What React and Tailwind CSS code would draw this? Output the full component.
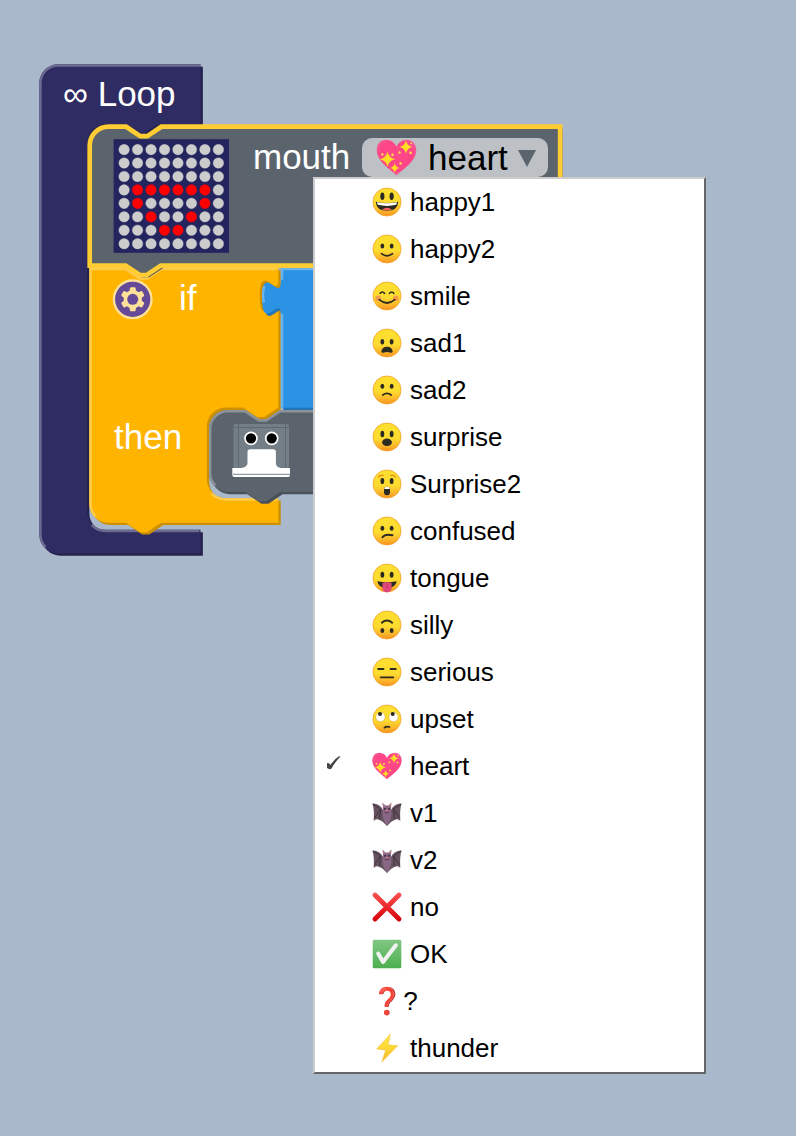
const LIT = new Set(['3-1', '3-2', '3-3', '3-4', '3-5', '3-6', '4-1', '4-6', '5-2', '5-5', '6-3', '6-4']);

const OPTIONS = [
  'happy1', 'happy2', 'smile', 'sad1', 'sad2', 'surprise', 'Surprise2', 'confused', 'tongue', 'silly',
  'serious', 'upset', 'heart', 'v1', 'v2', 'no', 'OK', '?', 'thunder',
];

// One block outline: shadow copy offset by one unit, body, then the highlighted edges.
function Shape({ x, y, d, light, fill, dark, hi, selected }) {
  return (
    <g transform={`translate(${x} ${y}) scale(2.35)`}>
      <path d={d} transform="translate(1 1)" fill={dark} />
      <path d={d} fill={fill} stroke={selected ? '#ffcc33' : 'none'} strokeWidth="2" />
      {light && <path d={light} fill="none" stroke={hi} strokeWidth="1" />}
    </g>
  );
}

const NOTCH = 'l 6,4 3,0 6,-4';
const NOTCH_BACK = 'l -6,4 -3,0 -6,-4';
const TAB = 'V 20.3 c 0,-10 -8,8 -8,-7.5 s 8,2.5 8,-7.5';

function Blocks() {
  return (
    <svg className="absolute inset-0" width="796" height="1136" viewBox="0 0 796 1136">
      <Shape x={39.3} y={64.3} fill="#2e2c62" dark="#25234e" hi="#6d6b91"
        d={`m 0,8 A 8,8 0 0,1 8,0 H 68.6 V 25.5 H 50.3 ${NOTCH_BACK} h -7 a 8,8 0 0,0 -8,8 V 190.100 a 8,8 0 0,0 8,8 H 68.6 V 208.1 H 8 a 8,8 0 0,1 -8,-8 z`}
        light="M 2.7,205.4 A 7.5,7.5 0 0,1 0.5,200.1 V 8 A 7.5,7.5 0 0,1 8,0.5 H 68.6 M 22.3,196.1 A 8.5,8.5 0 0,0 28.3,198.6 H 68.1" />
      <Shape x={89.4} y={268} fill="#ffb400" dark="#cc9000" hi="#ffcb4d"
        d={`m 0,0 H 15.500 ${NOTCH} H 80.4 V 59.4 ${NOTCH_BACK} h -7.4 a 8,8 0 0,0 -8,8 V 90 a 8,8 0 0,0 8,8 H 80.4 V 108.4 H 30.500 ${NOTCH_BACK} H 8 a 8,8 0 0,1 -8,-8 z`}
        light="M 2.7,105.7 A 7.5,7.5 0 0,1 0.5,100.4 V 0.5 H 15.5 l 6,4 3,0 6,-4 H 80 M 52,96 A 8.5,8.5 0 0,0 58,98.5 H 80" />
      <g transform="translate(278.6 266) scale(2.35)">
        <path d={`M 0,5 ${TAB} z`} fill="#cc9000" />
      </g>
      <Shape x={280.9} y={268} fill="#2b92e4" dark="#2275b6" hi="#6bb3ec"
        d={`M 0,0 H 60 V 59.5 H 0 ${TAB} z`}
        light="M 0.5,59.5 V 19.5 M -7.2,14.8 C -7.7,12.9 -7.7,9.8 -7,7.7 M 0.5,5 V 0.5 H 60" />
      <Shape x={209} y={410.1} fill="#5b646d" dark="#495057" hi="#8c9399"
        d={`m 0,8 A 8,8 0 0,1 8,0 H 15.300 ${NOTCH} H 80 V 34.8 H 30.300 ${NOTCH_BACK} H 8 a 8,8 0 0,1 -8,-8 z`}
        light="M 2.7,32.1 A 7.5,7.5 0 0,1 0.5,26.8 V 8 A 7.5,7.5 0 0,1 8,0.5 H 15.3 l 6,4 3,0 6,-4 H 80" />
      <Shape x={89.7} y={126.7} selected fill="#5b646d" dark="#495057"
        d={`m 0,8 A 8,8 0 0,1 8,0 H 15.500 ${NOTCH} H 200.2 V 59.1 H 30.300 ${NOTCH_BACK} H 0 z`} />
    </svg>
  );
}

function LedMatrix() {
  return (
    <svg className="mt-px shrink-0" width="116" height="114" viewBox="113 139 116 114">
      <rect x="113.6" y="139.200" width="115.4" height="113.600" fill="#24255f" />
      {Array.from({ length: 64 }, (_, i) => {
        const key = `${Math.floor(i / 8)}-${i % 8}`;
        const color = LIT.has(key) ? '#ff0000' : '#cccccc';
        return (
          <circle key={key} cx={124.1 + (i % 8) * 13.47} cy={149.6 + Math.floor(i / 8) * 13.44} r="5.3"
            fill={color} stroke={color} strokeOpacity="0.35" strokeWidth="0.9" />
        );
      })}
    </svg>
  );
}

function Gear() {
  return (
    <svg className="mt-px shrink-0" width="42" height="42" viewBox="112 279 42 42">
      <g transform="translate(113.9 280.5) scale(2.35)">
        <circle cx="8" cy="8" r="8" fill="#644a97" stroke="#ffe199" strokeWidth="1" />
        <path fill="#ffe199" d="m4.203,7.296 0,1.368 -0.92,0.677 -0.11,0.41 0.9,1.592 0.41,0.11 1.043,-0.457 1.187,0.683 0.127,1.134 0.3,0.3 1.8,0 0.3,-0.299 0.127,-1.138 1.185,-0.682 1.046,0.458 0.409,-0.11 0.9,-1.592 -0.11,-0.41 -0.92,-0.677 0,-1.366 0.92,-0.677 0.11,-0.41 -0.9,-1.592 -0.409,-0.109 -1.046,0.458 -1.185,-0.682 -0.127,-1.138 -0.3,-0.299 -1.8,0 -0.3,0.3 -0.126,1.135 -1.187,0.682 -1.043,-0.457 -0.41,0.11 -0.899,1.592 0.108,0.409z" />
        <circle cx="8" cy="8" r="2.35" fill="#644a97" />
      </g>
    </svg>
  );
}

function Robot() {
  return (
    <svg className="mt-[5px] shrink-0" width="64" height="58" viewBox="230 422 64 58">
      <rect x="233.5" y="424" width="55.5" height="48" rx="2" fill="#747e87" />
      <path d="M233.5 427.5H289M238.5 424V470M285.5 424V470" stroke="#59636c" strokeWidth="0.8" fill="none" />
      <path d="M232.300 468h9.200q6-1 6-5v-11q0-2.700 2.700-2.700h23q2.700 0 2.700 2.700v11q0 4 4.500 5h9.600v7q0 2-2 2h-53.700q-2 0-2-2z" fill="#fff" />
      <path d="M233 474.3H290" stroke="#5b646d" strokeWidth="0.8" />
      <circle cx="251" cy="438.3" r="6" fill="#000" stroke="#fff" strokeWidth="1.7" />
      <circle cx="271.7" cy="438.3" r="6" fill="#000" stroke="#fff" strokeWidth="1.7" />
    </svg>
  );
}

const INK = '#2b2b22';

function Eyes({ y, rx = 1.9, ry = 2.5, w = 9.3 }) {
  return (
    <g fill={INK}>
      <ellipse cx={16 - w / 2} cy={y} rx={rx} ry={ry} />
      <ellipse cx={16 + w / 2} cy={y} rx={rx} ry={ry} />
    </g>
  );
}

const line = { fill: 'none', stroke: INK, strokeWidth: 1.7, strokeLinecap: 'round' };

const FACES = {
  happy1: (
    <>
      <Eyes y={10.3} rx={2.1} ry={3.8} />
      <path d="M4.7 15.700Q16 18.300 27.300 15.700Q26.500 24.800 16 24.800Q5.500 24.800 4.700 15.700z" fill={INK} />
      <path d="M6 16.300Q16 18.300 26 16.300L25.300 18.800Q16 21 6.700 18.800z" fill="#fff" />
      <path d="M11 23.600Q16 19.800 21 23.600Q16 25.300 11 23.600z" fill="#f0625d" />
    </>
  ),
  happy2: <><Eyes y={13} /><path d="M10.500 20.700Q16 25 21.500 20.700" {...line} /></>,
  smile: (
    <>
      <circle cx="7.200" cy="18.200" r="2.800" fill="#f47a5e" opacity="0.65" />
      <circle cx="24.800" cy="18.200" r="2.800" fill="#f47a5e" opacity="0.65" />
      <path d="M9.200 13.300Q11.300 10.700 13.500 13.300M18.500 13.300Q20.700 10.700 22.800 13.300" {...line} />
      <path d="M8.200 19.700Q16 26.300 23.800 19.700" {...line} />
    </>
  ),
  sad1: <><Eyes y={14.8} ry={2.8} /><path d="M10.300 24.500Q11 19.700 16 19.700T21.700 24.500Q21.200 26.300 19 25.500Q16 24.300 13 25.500Q10.800 26.300 10.300 24.500z" fill={INK} /></>,
  sad2: <><Eyes y={12.2} /><path d="M11.800 21Q16 17.800 20.200 21" {...line} /></>,
  surprise: <><Eyes y={13} ry={3.2} /><ellipse cx="16" cy="21.300" rx="4.900" ry="3.700" fill={INK} /></>,
  Surprise2: (
    <>
      <path d="M7.500 9Q10 6.500 12.500 7.500M19.500 7.500Q22 6.500 24.500 9" fill="none" stroke="#e88b18" strokeWidth="1.200" strokeLinecap="round" />
      <Eyes y={13} ry={3.1} />
      <rect x="13" y="18.700" width="6" height="8.600" rx="3" fill={INK} />
      <path d="M13.200 21Q13.500 18.700 16 18.700T18.800 21z" fill="#fff" />
    </>
  ),
  confused: <><Eyes y={13.3} /><path d="M11.500 22.300Q14.200 18.300 21.500 20.300" {...line} strokeWidth="2" /></>,
  tongue: (
    <>
      <Eyes y={12.7} ry={3} />
      <path d="M6.300 19.300Q16 21.500 25.700 19.300Q24.500 26 16 26.300Q7.500 26 6.300 19.300z" fill={INK} />
      <path d="M11.400 21Q16 19.600 20.600 21V26Q20.300 30.300 16 30.300T11.400 26z" fill="#e0487c" />
      <path d="M16 21.500V26" stroke="#b52f60" strokeWidth="0.800" />
    </>
  ),
  silly: <><Eyes y={21.6} /><path d="M10.800 13.700Q16 9.500 21.200 13.700" {...line} strokeWidth="1.900" /></>,
  serious: <path d="M7.200 13H12.500M19.500 13H24.800M9.800 21.400H22.200" {...line} strokeWidth="1.900" />,
  upset: (
    <>
      <circle cx="9.500" cy="14" r="4.700" fill="#fff" stroke="#d99a20" strokeWidth="0.500" />
      <circle cx="22.500" cy="14" r="4.700" fill="#fff" stroke="#d99a20" strokeWidth="0.500" />
      <circle cx="9" cy="11.100" r="2" fill={INK} />
      <circle cx="21.700" cy="11.100" r="2" fill={INK} />
      <path d="M13.500 24.700Q15.500 22.800 18.500 24" {...line} />
    </>
  ),
};

const star = (x, y, r) =>
  `M${x} ${y - r}Q${x + r * 0.15} ${y - r * 0.15} ${x + r} ${y}Q${x + r * 0.15} ${y + r * 0.15} ${x} ${y + r}Q${x - r * 0.15} ${y + r * 0.15} ${x - r} ${y}Q${x - r * 0.15} ${y - r * 0.15} ${x} ${y - r}z`;

const BAT = (
  <>
    <path d="M1.300 6.500Q7 6.500 10.500 10.500L12 13H20L21.500 10.500Q25 6.500 30.700 6.500Q28.500 12 29.300 24Q27 21 23.500 23Q19.500 24.500 18.500 26.500L16 29L13.500 26.500Q12.500 24.500 8.500 23Q5 21 2.700 24Q3.500 12 1.300 6.500z" fill="#65525f" />
    <path d="M2 7L9.500 12L8.500 22M9.500 12L3.500 21M30 7L22.500 12L23.500 22M22.500 12L28.500 21" fill="none" stroke="#3c3040" strokeWidth="0.900" />
    <path d="M12 11L11.500 5.500L14.500 8.500H17.500L20.500 5.500L20 11L20.500 17Q20 24 16 28.500Q12 24 11.500 17z" fill="#8a6685" />
    <path d="M12.200 6.800L13.800 9L12.500 10zM19.800 6.800L18.200 9L19.500 10z" fill="#e08872" />
    <circle cx="14" cy="11.800" r="0.900" fill="#241c28" />
    <circle cx="18" cy="11.800" r="0.900" fill="#241c28" />
    <ellipse cx="16" cy="13.500" rx="1.100" ry="0.800" fill="#d87868" />
    <path d="M13.500 15.200Q16 16.800 18.500 15.200" fill="none" stroke="#3c3040" strokeWidth="0.700" />
  </>
);

const THINGS = {
  heart: (
    <>
      <path d="M16 29.300C13 26 1.300 19.500 1.300 10.500C1.300 5.500 4.500 2.800 8.300 2.800C12 2.800 14.600 5 16 8C17.400 5 20 2.800 23.700 2.800C27.500 2.800 30.700 5.500 30.700 10.500C30.700 19.500 19 26 16 29.300z" fill="url(#pink)" />
      <path d={`${star(23, 8.2, 5)}${star(9.3, 17.3, 5.8)}${star(14.7, 23.8, 3.7)}`} fill="#ffdd22" />
      <g fill="#ffdd55">
        <circle cx="18.300" cy="12.300" r="0.900" /><circle cx="26.500" cy="12.500" r="1" /><circle cx="5.500" cy="13.700" r="0.900" />
        <circle cx="13" cy="14" r="1" /><circle cx="19" cy="20.500" r="0.900" /><circle cx="27" cy="5.500" r="0.700" />
      </g>
    </>
  ),
  v1: BAT,
  v2: BAT,
  no: <path d="M4 4L28 28M28.001 4L4 28" fill="none" stroke="url(#red)" strokeWidth="4.900" strokeLinecap="round" />,
  OK: (
    <>
      <rect x="1.700" y="1.700" width="28.600" height="28.600" rx="1.500" fill="url(#green)" />
      <path d="M7.200 15.500L12 24L24.800 7.300" fill="none" stroke="#f2f2f2" strokeWidth="4" strokeLinecap="round" strokeLinejoin="round" />
    </>
  ),
  thunder: <path d="M19.300 2L5.700 17L14.700 18L10.800 30L26.700 13.700L17.300 12.800z" fill="url(#bolt)" stroke="#f5b82e" strokeWidth="0.500" strokeLinejoin="round" />,
};

function Emoji({ name, className }) {
  return (
    <svg className={className} viewBox="0 0 32 32" aria-hidden="true">
      {FACES[name] && <circle cx="16" cy="16" r="14" fill="url(#skin)" stroke="#f2a22c" strokeWidth="0.800" />}
      {FACES[name] || THINGS[name]}
    </svg>
  );
}

function Gradients() {
  return (
    <svg className="absolute h-0 w-0">
      <defs>
        <linearGradient id="skin" x1="0" y1="0" x2="0" y2="1">
          <stop offset="0" stopColor="#fde030" /><stop offset="0.55" stopColor="#fddb2f" /><stop offset="0.8" stopColor="#fbb82a" /><stop offset="1" stopColor="#f7921e" />
        </linearGradient>
        <radialGradient id="pink" cx="0.5" cy="0.45" r="0.6">
          <stop offset="0" stopColor="#ff4888" /><stop offset="0.7" stopColor="#ff4585" /><stop offset="1" stopColor="#f0609a" />
        </radialGradient>
        <linearGradient id="red" gradientUnits="userSpaceOnUse" x1="0" y1="2" x2="0" y2="30">
          <stop offset="0" stopColor="#ff5252" /><stop offset="1" stopColor="#d50008" />
        </linearGradient>
        <linearGradient id="green" x1="0" y1="0" x2="0" y2="1">
          <stop offset="0" stopColor="#81c784" /><stop offset="1" stopColor="#4caf50" />
        </linearGradient>
        <linearGradient id="bolt" x1="0" y1="0" x2="0" y2="1">
          <stop offset="0" stopColor="#feea50" /><stop offset="0.5" stopColor="#fdd835" /><stop offset="1" stopColor="#f9b52c" />
        </linearGradient>
      </defs>
    </svg>
  );
}

function Menu() {
  return (
    <div className="absolute left-[313px] top-[177px] flex h-[897px] w-[393px] flex-col border-2 border-t-[#cccccc] border-r-[#666666] border-b-[#666666] border-l-[#cccccc] bg-white text-[26px] leading-[47px] text-black">
      {OPTIONS.map((label) => (
        <div key={label} className="flex h-[47px] shrink-0 items-center pl-[11px]">
          <span className="flex w-[45px] shrink-0 items-center">
            {label === 'heart' && (
              <svg className="mb-2 h-4 w-4" viewBox="0 0 16 16">
                <path d="M1 8.200Q3 7.200 4.500 10Q8 4 13 1.200L14.500 1.500Q9 7 5.500 13.500Q3.500 15 1 13z" fill="#444" />
              </svg>
            )}
          </span>
          {label === '?' ? (
            <span>❓?</span>
          ) : (
            <>
              <Emoji name={label} className="mb-px h-8 w-8 shrink-0" />
              <span className="ml-[7px]">{label}</span>
            </>
          )}
        </div>
      ))}
    </div>
  );
}

export default function App() {
  return (
    <main className="relative h-[1136px] w-[796px] overflow-hidden bg-[#a9b8ca] font-['Liberation_Sans','Noto_Color_Emoji',sans-serif] text-[35px] leading-10 whitespace-pre text-white">
      <Gradients />
      <Blocks />
      <div className="relative flex flex-col pt-[74px]">
        <div className="h-10 pl-[63px]">∞ Loop</div>
        <div className="mt-6 flex h-[115px] items-start gap-6 pl-[113px]">
          <LedMatrix />
          <div className="flex h-[38px] items-start">
            <span className="w-[109px] shrink-0 leading-[38px]">mouth</span>
            <span className="flex h-[39px] w-[186px] shrink-0 items-center rounded-[10px] bg-[#bdc1c5] pl-[13px] text-black">
              <Emoji name="heart" className="h-[43px] w-[43px] shrink-0" />
              <span className="ml-2.5 leading-[38px]">heart</span>
              <svg className="mt-0.5 ml-2.5 h-[17px] w-[18px]" viewBox="0 0 18 17">
                <path d="M0 0H18L9 17z" fill="#5b646d" />
              </svg>
            </span>
          </div>
        </div>
        <div className="mt-[25px] flex h-10 items-start gap-[25px] pl-[112px]">
          <Gear />
          <span>if</span>
        </div>
        <div className="mt-[99px] flex h-16 items-start pl-[114px]">
          <span className="w-[116px] shrink-0">then</span>
          <Robot />
        </div>
      </div>
      <Menu />
    </main>
  );
}
